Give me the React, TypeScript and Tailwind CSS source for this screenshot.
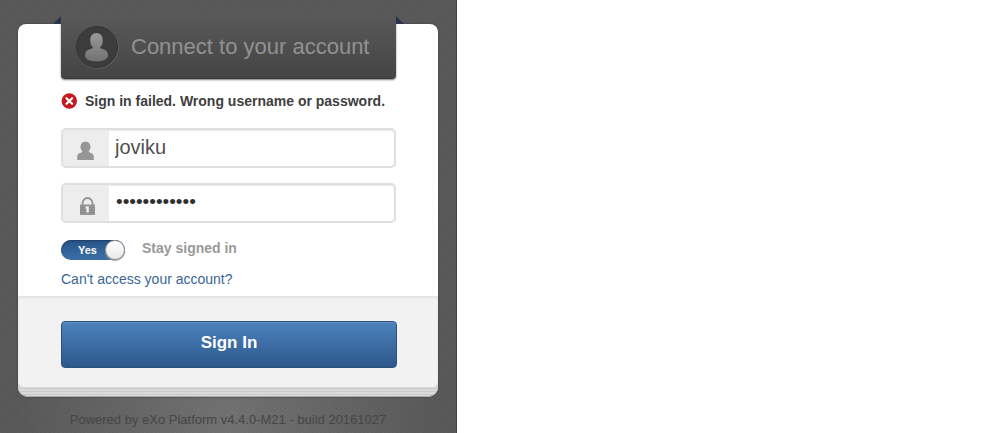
import { useState } from 'react';

function AvatarIcon() {
  return (
    <svg className="size-11 shrink-0" viewBox="0 0 44 44" aria-hidden="true">
      <defs>
        <linearGradient id="avatar" x1="0" y1="0" x2="0" y2="1">
          <stop offset="0" stopColor="#999" />
          <stop offset="1" stopColor="#727272" />
        </linearGradient>
      </defs>
      <circle cx="22.500" cy="22.500" r="20.800" fill="none" stroke="#686868" />
      <circle cx="22" cy="22" r="20.500" fill="#3c3c3c" stroke="#333" />
      <path
        d="M21.500 8c-3.900 0-6.300 3-6.300 7.300 0 3.200 1.100 5.700 2.800 7.100-.3.900-1.200 1.200-2.600 1.500-3.700.8-5.400 3.400-5.400 6.400 0 4.200 4.800 6.200 11.500 6.200S33 34.500 33 30.300c0-3-1.700-5.600-5.400-6.400-1.400-.3-2.300-.6-2.600-1.500 1.700-1.400 2.800-3.900 2.800-7.100C27.800 11 25.400 8 21.500 8z"
        fill="url(#avatar)"
      />
    </svg>
  );
}

function ErrorIcon() {
  return (
    <svg className="size-4 shrink-0" viewBox="0 0 16 16" aria-hidden="true">
      <circle cx="8.300" cy="8" r="7.700" fill="#c4191e" />
      <path d="M5.500 5.200l5.600 5.600M11.100 5.200l-5.600 5.600" stroke="#fff" strokeWidth="2.200" strokeLinecap="round" />
    </svg>
  );
}

function UserIcon() {
  return (
    <svg className="mt-1.5 h-5 w-5" viewBox="0 0 20 20" aria-hidden="true">
      <path
        d="M9.500.8C6.500.8 4.500 2.900 4.500 5.800c0 1.900.7 3.500 1.900 4.500-.2.900-.9 1.300-2.300 1.700C2 12.600 1.200 13.900 1.200 16v3h16.600v-3c0-2.100-.8-3.400-2.900-4-1.400-.4-2.100-.8-2.300-1.700 1.200-1 1.900-2.600 1.900-4.500C14.500 2.900 12.500.8 9.500.8z"
        fill="#969696"
      />
    </svg>
  );
}

function LockIcon() {
  return (
    <svg className="mt-1.5 ml-1 h-5 w-5" viewBox="0 0 20 20" aria-hidden="true">
      <path d="M4.500 9V7.500a5 5.500 0 0 1 10 0V9" fill="none" stroke="#949494" strokeWidth="1.800" />
      <path d="M2 8.500h15V19H2z" fill="#969696" />
      <path d="M2.500 11.500h14M2.500 14h14M2.500 16.500h14" stroke="#858585" strokeWidth=".7" />
      <path d="M7.500 10.500h3.300v6H8.500v-4h-1z" fill="#f4f4f4" />
    </svg>
  );
}

const fieldClass =
  'flex h-10 overflow-hidden rounded-[5px] border-2 border-[#dfdfdf] bg-white shadow-[inset_0_1px_1px_#e8e8e8]';
const addonClass = 'flex w-[46px] shrink-0 items-center justify-center bg-[#ededed]';

export default function App() {
  const [stay, setStay] = useState(true);
  return (
    <div className="min-h-screen bg-white font-['Liberation_Sans',Arial,sans-serif]">
      <main className="flex min-h-screen w-[45.7%] min-w-[400px] flex-col border-r border-[#444] bg-[#585858] bg-[repeating-linear-gradient(135deg,#ffffff06_0px,#ffffff06_1px,transparent_1px,transparent_3px),radial-gradient(ellipse_at_50%_100%,#707070_0%,#575757_65%)] px-[18px] pt-6">
        <form
          className="rounded-t-[8px] rounded-b-[10px] bg-white shadow-[0_0_2px_#333]"
          onSubmit={(e) => e.preventDefault()}
        >
          <div className="pr-[42px] pl-[43px]">
            <header className="relative -mt-2 flex h-[63px] items-center gap-3 rounded-b-[4px] border-b border-[#383838] bg-linear-to-b from-[#595959] to-[#444] px-[14px] shadow-[0_1px_2px_#777]">
              <svg className="absolute top-0 -left-2 h-2 w-2" viewBox="0 0 8 8" aria-hidden="true">
                <path d="M8 0v8H0z" fill="#28364d" />
              </svg>
              <svg className="absolute top-0 -right-2 h-2 w-2" viewBox="0 0 8 8" aria-hidden="true">
                <path d="M0 0v8h8z" fill="#28364d" />
              </svg>
              <AvatarIcon />
              <h1 className="text-[22px] leading-6 whitespace-nowrap text-[#929292]">Connect to your account</h1>
            </header>

            <p role="alert" className="mt-3 flex h-5 items-center gap-2 text-sm font-bold whitespace-nowrap text-[#404040]">
              <ErrorIcon />
              Sign in failed. Wrong username or password.
            </p>

            <div className="mt-[17px] flex flex-col gap-[15px]">
              <div className={fieldClass}>
                <label htmlFor="username" aria-label="Username" className={addonClass}>
                  <UserIcon />
                </label>
                <input
                  id="username"
                  type="text"
                  defaultValue="joviku"
                  className="min-w-0 flex-1 bg-transparent px-[6px] pb-[2px] text-xl text-[#505050] outline-none"
                />
              </div>
              <div className={fieldClass}>
                <label htmlFor="password" aria-label="Password" className={addonClass}>
                  <LockIcon />
                </label>
                <input
                  id="password"
                  type="password"
                  defaultValue="password1234"
                  className="min-w-0 flex-1 bg-transparent px-[7px] pb-[2px] text-[19px] text-[#303030] outline-none"
                />
              </div>
            </div>

            <label className="mt-[15px] flex h-6 cursor-pointer items-center gap-[17px]">
              <input
                type="checkbox"
                className="peer sr-only"
                checked={stay}
                onChange={(e) => setStay(e.target.checked)}
              />
              <span className="flex h-5 w-16 items-center justify-end rounded-full bg-linear-to-b from-[#285487] to-[#3d70a8] pl-[17px] shadow-[inset_0_1px_2px_#1d3d66] peer-focus-visible:outline-2">
                <span className="flex-1 text-[11px] font-bold text-white">{stay ? 'Yes' : 'No'}</span>
                <span className="size-5 rounded-full border border-[#999] bg-linear-to-b from-white to-[#e9e9e9] shadow-[0_1px_1px_#999]" />
              </span>
              <span className="pb-[5px] text-sm font-bold text-[#999]">Stay signed in</span>
            </label>
            <a href="#recover" className="mt-[7px] mb-[7px] block text-sm text-[#3b6595]">
              Can't access your account?
            </a>
          </div>

          <div className="rounded-b-[10px] border-b border-[#aaa] bg-[repeating-linear-gradient(to_bottom,#d9dbdb_0px,#d9dbdb_2px,#cacccc_2px,#cacccc_3px)] pb-[9px]">
            <div className="rounded-b-[6px] border-t border-[#e2e2e2] bg-[#f2f2f2] pr-[41px] pl-[43px] pt-6 pb-[19px] shadow-[inset_0_2px_2px_#e9e9e9]">
              <button
                type="submit"
                className="h-[47px] w-full rounded-[4px] border border-[#2c517d] bg-linear-to-b from-[#4d82bd] to-[#2d588c] pb-1 text-[17px] font-bold text-white shadow-[inset_0_1px_0_#6590bd]"
              >
                Sign In
              </button>
            </div>
          </div>
        </form>
        <footer className="pt-[13px] text-center text-[13px] leading-5 whitespace-nowrap text-[#454545]">
          Powered by eXo Platform v4.4.0-M21 - build 20161027
        </footer>
      </main>
    </div>
  );
}
